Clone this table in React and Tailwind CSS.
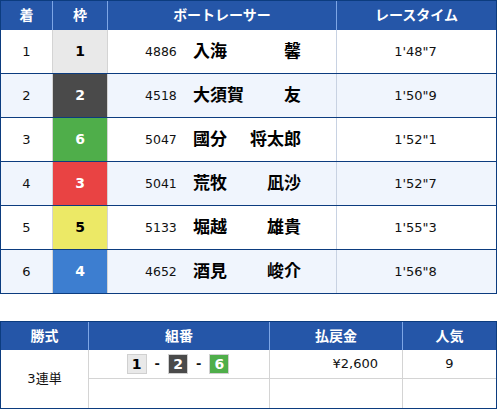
const rows = [
  { pos: 1, frame: 1, no: "4886", last: "入海", first: "馨", time: "1'48\"7" },
  { pos: 2, frame: 2, no: "4518", last: "大須賀", first: "友", time: "1'50\"9" },
  { pos: 3, frame: 6, no: "5047", last: "國分", first: "将太郎", time: "1'52\"1" },
  { pos: 4, frame: 3, no: "5041", last: "荒牧", first: "凪沙", time: "1'52\"7" },
  { pos: 5, frame: 5, no: "5133", last: "堀越", first: "雄貴", time: "1'55\"3" },
  { pos: 6, frame: 4, no: "4652", last: "酒見", first: "峻介", time: "1'56\"8" },
];

const frameStyle = {
  1: "bg-[#e9e9e9] text-black",
  2: "bg-[#4a4a4a] text-white",
  3: "bg-[#e94343] text-white",
  4: "bg-[#3d7ed0] text-white",
  5: "bg-[#ece966] text-black",
  6: "bg-[#4fae4a] text-white",
};

const head = "bg-[#2556a8] text-white font-bold text-[14px] flex items-center justify-center";

function Badge({ n }) {
  return (
    <span
      className={`w-[20px] h-[20px] flex items-center justify-center font-bold text-[14px] border border-[#d0d0d0] ${frameStyle[n]}`}
    >
      {n}
    </span>
  );
}

export default function App() {
  return (
    <div
      className="w-[497px] h-[410px] bg-white overflow-hidden text-[#111]"
      style={{ fontFamily: '"DejaVu Sans", "Noto Sans CJK JP", sans-serif' }}
    >
      <div className="border border-[#0c3c7f] border-b-0">
        <div className="grid grid-cols-[52px_55px_229px_1fr] h-[29px]">
          <div className={`${head} border-r border-[#7ea6e6]`}>着</div>
          <div className={`${head} border-r border-[#7ea6e6]`}>枠</div>
          <div className={`${head} border-r border-[#7ea6e6]`}>ボートレーサー</div>
          <div className={head}>レースタイム</div>
        </div>
        {rows.map((r, i) => (
          <div
            key={r.pos}
            className={`grid grid-cols-[52px_55px_229px_1fr] h-[44px] border-b border-[#0c3c7f] ${
              i % 2 ? "bg-[#f0f5fd]" : "bg-white"
            }`}
          >
            <div className="flex items-center justify-center text-[13px] border-r border-[#d4d4d4]">
              {r.pos}
            </div>
            <div
              className={`flex items-center justify-center font-bold text-[14px] border-r border-[#d4d4d4] ${frameStyle[r.frame]}`}
            >
              {r.frame}
            </div>
            <div className="flex items-center border-r border-[#c8d2e2] pl-[37px]">
              <span className="text-[12.5px] w-[48px] pt-[2px]">{r.no}</span>
              <span className="w-[108px] flex justify-between font-bold text-[17px] text-black">
                <span>{r.last}</span>
                <span>{r.first}</span>
              </span>
            </div>
            <div className="flex items-center justify-center text-[13px] pr-[2px]">{r.time}</div>
          </div>
        ))}
      </div>

      <div className="mt-[27px] border border-[#0c3c7f]">
        <div className="grid grid-cols-[88px_181px_133px_1fr] h-[28px]">
          <div className={`${head} border-r border-[#7ea6e6]`}>勝式</div>
          <div className={`${head} border-r border-[#7ea6e6]`}>組番</div>
          <div className={`${head} border-r border-[#7ea6e6]`}>払戻金</div>
          <div className={head}>人気</div>
        </div>
        <div className="grid grid-cols-[88px_181px_133px_1fr] grid-rows-[29px_29px]">
          <div className="row-span-2 flex items-center justify-center text-[13px] border-r border-[#d4d4d4]">
            3連単
          </div>
          <div className="flex items-center justify-center gap-[8px] border-r border-b border-[#d4d4d4] pr-[2px]">
            <Badge n={1} />
            <span className="font-bold text-[13px]">-</span>
            <Badge n={2} />
            <span className="font-bold text-[13px]">-</span>
            <Badge n={6} />
          </div>
          <div className="flex items-center justify-end pr-[24px] text-[13px] border-r border-b border-[#d4d4d4]">
            ¥2,600
          </div>
          <div className="flex items-center justify-center text-[13px] border-b border-[#d4d4d4]">9</div>
          <div className="border-r border-[#d4d4d4]"></div>
          <div className="border-r border-[#d4d4d4]"></div>
          <div></div>
        </div>
      </div>
    </div>
  );
}
